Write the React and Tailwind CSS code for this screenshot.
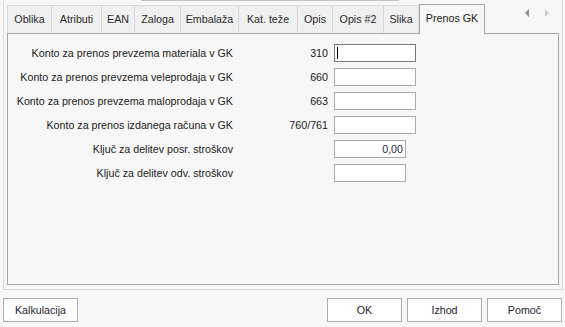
import React from "react";

const tabs = [
  { label: "Oblika", w: "w-[45px]" },
  { label: "Atributi", w: "w-[50px]" },
  { label: "EAN", w: "w-[33px]" },
  { label: "Zaloga", w: "w-[46px]" },
  { label: "Embalaža", w: "w-[58px]" },
  { label: "Kat. teže", w: "w-[59px]" },
  { label: "Opis", w: "w-[35px]" },
  { label: "Opis #2", w: "w-[51px]" },
  { label: "Slika", w: "w-[35px]" },
];

const rows = [
  { label: "Konto za prenos prevzema materiala v GK", value: "310", w: "w-[82px]", focus: true },
  { label: "Konto za prenos prevzema veleprodaja v GK", value: "660", w: "w-[82px]" },
  { label: "Konto za prenos prevzema maloprodaja v GK", value: "663", w: "w-[82px]" },
  { label: "Konto za prenos izdanega računa v GK", value: "760/761", w: "w-[82px]" },
  { label: "Ključ za delitev posr. stroškov", value: "", w: "w-[72px]", input: "0,00" },
  { label: "Ključ za delitev odv. stroškov", value: "", w: "w-[72px]" },
];

function Btn({ children }) {
  return (
    <div className="w-[75px] h-[24px] border border-[#adadad] bg-white flex items-center justify-center text-[#1f2430]">
      {children}
    </div>
  );
}

export default function App() {
  return (
    <div
      className="w-[565px] h-[327px] bg-[#f7f7f7] overflow-hidden text-[10.7px] leading-none text-[#1a1a1a]"
      style={{ fontFamily: '"Liberation Sans", Arial, sans-serif' }}
    >
      <div className="relative ml-[3px] w-[560px] h-[290px] border-l border-r border-b border-[#d9d9d9] pl-[3px] pr-[3px] flex flex-col">
        <div className="absolute left-[137px] top-0 w-[258px] h-px bg-[#c4c4c4]" />
        {/* tab strip */}
        <div className="flex items-start pt-[4px] h-[33px] shrink-0">
          {tabs.map((t, i) => (
            <div
              key={t.label}
              className={`${t.w} mt-px h-[28px] bg-[#f0f0f0] border-t border-r border-[#d9d9d9] ${i === 0 ? "border-l" : ""} flex items-center justify-center text-[#2a2a2a]`}
            >
              {t.label}
            </div>
          ))}
          <div className="relative z-10 w-[66px] h-[30px] bg-[#f7f7f7] border-l border-t border-r border-[#a5a5a5] flex items-center justify-center pb-[2px] text-[#1a1a1a]">
            Prenos GK
          </div>
          <div className="ml-auto mr-[10px] mt-[5px] flex items-center gap-[16px]">
            <svg width="4" height="8" viewBox="0 0 4 8">
              <path d="M4 0 L0 4 L4 8 Z" fill="#8c8c8c" />
            </svg>
            <svg width="4" height="8" viewBox="0 0 4 8">
              <path d="M0 0 L4 4 L0 8 Z" fill="#cfcfcf" />
            </svg>
          </div>
        </div>
        {/* panel */}
        <div className="h-[252px] shrink-0 border border-[#a5a5a5] bg-[#f7f7f7] pt-[10px] flex flex-col gap-[6px]">
          {rows.map((r) => (
            <div key={r.label} className="flex items-center h-[18px]">
              <div className="w-[225px] text-right whitespace-nowrap">{r.label}</div>
              <div className="w-[95px] text-right">{r.value}</div>
              <div
                className={`${r.w} ml-[6px] h-[18px] bg-white border ${r.focus ? "border-[#7a7a7a]" : "border-[#ababab]"} relative flex items-center justify-end pr-[2px] text-[#1f2a44]`}
              >
                {r.focus && <div className="absolute left-[2px] top-[2px] w-px h-[12px] bg-black" />}
                {r.input}
              </div>
            </div>
          ))}
        </div>
      </div>
      <div className="flex mt-[8px] px-[3px]">
        <Btn>Kalkulacija</Btn>
        <div className="ml-auto flex gap-[5px]">
          <Btn>OK</Btn>
          <Btn>Izhod</Btn>
          <Btn>Pomoč</Btn>
        </div>
      </div>
    </div>
  );
}
